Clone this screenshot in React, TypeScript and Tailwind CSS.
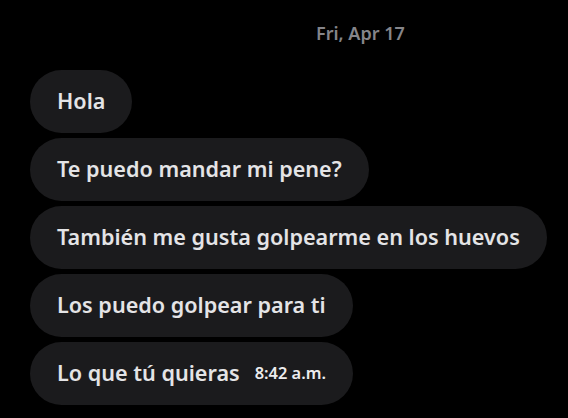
import React from 'react'

const messages = [
  'Hola',
  'Te puedo mandar mi pene?',
  'También me gusta golpearme en los huevos',
  'Los puedo golpear para ti',
]

function Bubble({ children }: { children: React.ReactNode }) {
  return (
    <div className="flex h-[63px] w-fit items-center rounded-full bg-[#1b1b1d] pl-[27px] pr-[27px] text-[21.6px] font-semibold text-[#e4e4e6]">
      {children}
    </div>
  )
}

export default function App() {
  return (
    <div
      className="h-[418px] w-[568px] overflow-hidden bg-black"
      style={{ fontFamily: '"Noto Sans", "Open Sans", sans-serif' }}
    >
      <div className="ml-[316px] pt-[20px] text-[18px] font-semibold leading-[26px] text-[#85858a]">
        Fri, Apr 17
      </div>
      <div className="mt-[24px] flex flex-col gap-[5px] pl-[30px]">
        {messages.map((m) => (
          <Bubble key={m}>{m}</Bubble>
        ))}
        <Bubble>
          <span>Lo que tú quieras</span>
          <span className="ml-[15px] text-[16.4px] font-semibold text-[#ececee]">8:42 a.m.</span>
        </Bubble>
      </div>
    </div>
  )
}
